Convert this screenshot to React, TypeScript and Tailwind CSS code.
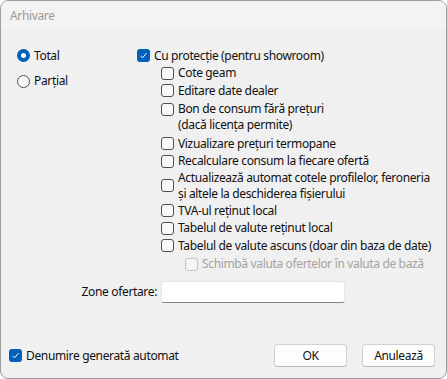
import React from "react";

function Check({ checked = false, disabled = false }: { checked?: boolean; disabled?: boolean }) {
  if (checked) {
    return (
      <span className="flex h-[13px] w-[13px] shrink-0 items-center justify-center rounded-[3px] bg-[#005fb8]">
        <svg width="9" height="9" viewBox="0 0 9 9" fill="none">
          <path d="M1.5 4.8 L3.5 6.8 L7.5 2.2" stroke="#fff" strokeWidth="1" />
        </svg>
      </span>
    );
  }
  return (
    <span
      className={
        disabled
          ? "h-[13px] w-[13px] shrink-0 rounded-[3px] border border-[#c5c5c5] bg-[#f6f6f6]"
          : "h-[13px] w-[13px] shrink-0 rounded-[3px] border border-[#4f4f4f] bg-[#f8f8f8]"
      }
    />
  );
}

function Radio({ checked = false }: { checked?: boolean }) {
  if (checked) {
    return (
      <span className="flex h-[13px] w-[13px] shrink-0 items-center justify-center rounded-full bg-[#005fb8]">
        <span className="h-[5px] w-[5px] rounded-full bg-white" />
      </span>
    );
  }
  return <span className="h-[13px] w-[13px] shrink-0 rounded-full border border-[#4f4f4f] bg-[#f8f8f8]" />;
}

function Row({ label, checked }: { label: string; checked?: boolean }) {
  return (
    <div className="flex h-[17.5px] items-center gap-[4px]">
      <Check checked={checked} />
      <span>{label}</span>
    </div>
  );
}

const subOptions = ["Cote geam", "Editare date dealer"];

export default function App() {
  return (
    <div
      className="flex h-[379px] w-[447px] flex-col overflow-hidden rounded-[8px] border border-[#9d9d9d] bg-[#f0f0f0] text-[12px] leading-[16px] tracking-[-0.35px] text-[#111]"
      style={{ fontFamily: '"Segoe UI", "Noto Sans", Arial, sans-serif' }}
    >
      <div className="flex h-[30px] shrink-0 items-center border-b border-[#ececec] bg-[#f3f3f3] pl-[9px] text-[#9a9a9a]">
        Arhivare
      </div>

      <div className="flex flex-1 flex-col">
        <div className="flex pt-[16px]">
          <div className="flex w-[136px] shrink-0 flex-col pl-[16px]">
            <div className="flex h-[17.5px] items-center gap-[4px]">
              <Radio checked />
              <span>Total</span>
            </div>
            <div className="mt-[8px] flex h-[17.5px] items-center gap-[4px]">
              <Radio />
              <span>Parțial</span>
            </div>
          </div>

          <div className="flex flex-col">
            <Row label="Cu protecție (pentru showroom)" checked />
            <div className="flex flex-col pl-[24px]">
              {subOptions.map((o) => (
                <Row key={o} label={o} />
              ))}
              <div className="flex items-start gap-[4px] pt-[1px]">
                <span className="mt-[2px] flex shrink-0">
                  <Check />
                </span>
                <span className="leading-[16px]">
                  Bon de consum fără prețuri
                  <br />
                  (dacă licența permite)
                </span>
              </div>
              <div className="mt-[2.5px]">
                <Row label="Vizualizare prețuri termopane" />
                <Row label="Recalculare consum la fiecare ofertă" />
              </div>
              <div className="flex items-center gap-[4px]">
                <Check />
                <span className="leading-[15.5px]">
                  Actualizează automat cotele profilelor, feroneria
                  <br />
                  și altele la deschiderea fișierului
                </span>
              </div>
              <div className="mt-[1px]">
                <Row label="TVA-ul reținut local" />
                <Row label="Tabelul de valute reținut local" />
                <Row label="Tabelul de valute ascuns (doar din baza de date)" />
              </div>
              <div className="mt-[1px] flex h-[17.5px] items-center gap-[4px] pl-[24px] text-[#a3a3a3]">
                <Check disabled />
                <span>Schimbă valuta ofertelor în valuta de bază</span>
              </div>
            </div>
          </div>
        </div>

        <div className="mt-[8px] flex items-center">
          <span className="w-[160px] pr-[4px] text-right">Zone ofertare:</span>
          <div className="h-[22px] w-[184px] rounded-[3px] border border-[#e6e6e6] border-b-[#868686] bg-white" />
        </div>

        <div className="mt-auto flex items-center pb-[11px] pl-[8px] pr-[11px]">
          <div className="flex items-center gap-[4px]">
            <Check checked />
            <span>Denumire generată automat</span>
          </div>
          <div className="ml-auto flex gap-[15px]">
            <button className="h-[23px] w-[73px] rounded-[4px] border border-[#d0d0d0] border-b-[#b8b8b8] bg-[#fdfdfd]">
              OK
            </button>
            <button className="h-[23px] w-[73px] rounded-[4px] border border-[#d0d0d0] border-b-[#b8b8b8] bg-[#fdfdfd]">
              Anulează
            </button>
          </div>
        </div>
      </div>
    </div>
  );
}
